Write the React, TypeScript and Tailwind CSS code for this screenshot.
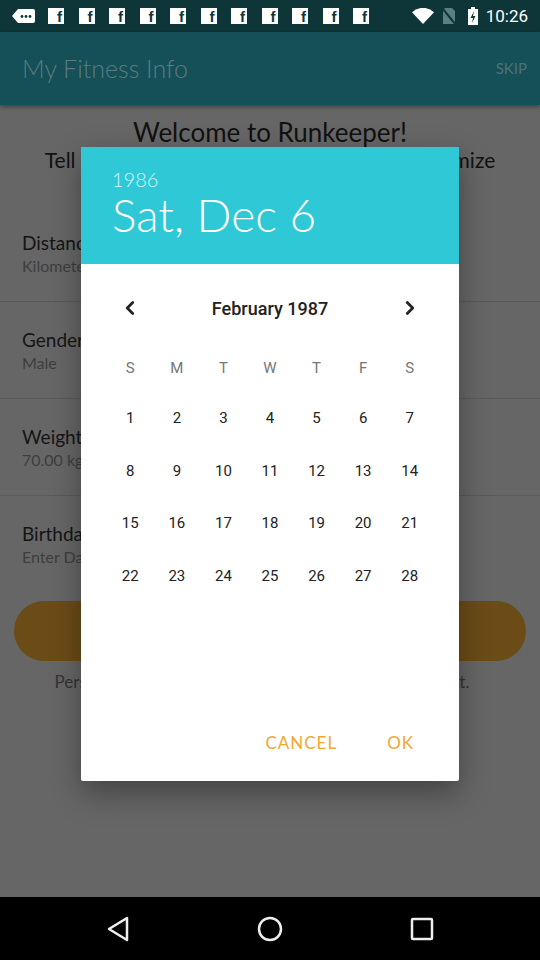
import { ChevronLeft, ChevronRight } from "lucide-react";

const WEEKDAYS = ["S", "M", "T", "W", "T", "F", "S"];
const DAYS = Array.from({ length: 28 }, (_, i) => i + 1);

function StatusBar() {
  return (
    <div className="flex h-[32px] items-center bg-[#0e3538] pl-[12px] pr-[12px] text-white">
      {/* notification bubble */}
      <svg width="23" height="14" viewBox="0 0 23 14" className="mr-[13px]">
        <path d="M6 0h15a2 2 0 0 1 2 2v10a2 2 0 0 1-2 2H6L0 7z" fill="#fff" />
        <circle cx="10" cy="7.5" r="1.4" fill="#0e3538" />
        <circle cx="14" cy="7.5" r="1.4" fill="#0e3538" />
        <circle cx="18" cy="7.5" r="1.4" fill="#0e3538" />
      </svg>
      <div className="flex gap-[14.5px]">
        {Array.from({ length: 11 }).map((_, i) => (
          <div
            key={i}
            className="flex h-[16px] w-[16px] items-end justify-end bg-white pr-[2px] font-['Liberation_Sans',sans-serif] text-[15px] font-bold leading-[14px] text-[#0e3538]"
          >
            f
          </div>
        ))}
      </div>
      <div className="ml-auto flex items-center">
        <svg width="22" height="16" viewBox="0 0 22 16">
          <path d="M11 16L0 4.2A16 16 0 0 1 22 4.2z" fill="#fff" />
        </svg>
        <svg width="14" height="18" viewBox="0 0 14 18" className="ml-[8px]">
          <path d="M3 1h7l3 3v13H1V3z" fill="#5c7f81" />
          <path d="M0.5 1.5L13.5 17.5" stroke="#0e3538" strokeWidth="2" />
        </svg>
        <svg width="10" height="18" viewBox="0 0 10 18" className="ml-[12px]">
          <rect x="3" y="0" width="4" height="2" fill="#fff" />
          <rect x="0" y="2" width="10" height="16" fill="#fff" />
          <path d="M6 4L2.5 11h2.5l-1 5 3.5-7H5z" fill="#0e3538" />
        </svg>
        <span className="ml-[8px] font-['Roboto',sans-serif] text-[17px] leading-none">10:26</span>
      </div>
    </div>
  );
}

function FieldRow({ label, value, last }: { label: string; value: string; last?: boolean }) {
  return (
    <div className={`flex h-[97px] flex-col justify-center px-[22px] ${last ? "" : "border-b border-[#5a5a5a]"}`}>
      <div className="text-[19px] leading-[25px] text-[#151515]">{label}</div>
      <div className="text-[16px] leading-[22px] text-[#3e3e3e]">{value}</div>
    </div>
  );
}

function DatePicker() {
  return (
    <div className="absolute left-[81px] top-[147px] flex h-[634px] w-[378px] flex-col rounded-[2px] bg-white shadow-[0_12px_30px_rgba(0,0,0,0.35)]">
      <div className="flex h-[117px] flex-col bg-[#2ec8d6] pl-[31px] pt-[21px] font-['Lato',sans-serif] font-light text-white">
        <div className="text-[20px] leading-[22px] text-[#d9f5f8]">1986</div>
        <div className="mt-[2px] text-[46px] leading-[46px]">Sat, Dec 6</div>
      </div>
      <div className="flex flex-1 flex-col px-[26px] pt-[20px] font-['Roboto',sans-serif]">
        <div className="flex h-[48px] items-center justify-between">
          <div className="flex w-[46.5px] justify-center text-[#222]">
            <ChevronLeft size={22} strokeWidth={3} />
          </div>
          <div className="text-[18px] font-medium text-[#222]">February 1987</div>
          <div className="flex w-[46.5px] justify-center text-[#222]">
            <ChevronRight size={22} strokeWidth={3} />
          </div>
        </div>
        <div className="mt-[12px] grid grid-cols-7">
          {WEEKDAYS.map((d, i) => (
            <div key={i} className="flex h-[48px] items-center justify-center text-[15px] text-[#767676]">
              {d}
            </div>
          ))}
          {DAYS.map((d) => (
            <div key={d} className="flex h-[52.5px] items-center justify-center text-[15px] text-[#222]">
              {d}
            </div>
          ))}
        </div>
        <div className="mt-auto mb-[20px] -mr-[26px] flex h-[36px] items-center justify-end gap-[18px] pr-[29px] font-['Lato',sans-serif] text-[17px] tracking-[1px] text-[#f3a733]">
          <span className="px-4">CANCEL</span>
          <span className="px-4">OK</span>
        </div>
      </div>
    </div>
  );
}

export default function App() {
  return (
    <div className="relative flex h-[960px] w-[540px] flex-col overflow-hidden bg-[#666666] font-['Lato',sans-serif]">
      <StatusBar />
      <div className="flex h-[73px] items-center justify-between bg-[#154f57] pl-[22px] pr-[13px] shadow-[0_2px_4px_rgba(0,0,0,0.35)]">
        <span className="text-[25px] font-light text-[#5a7c80]">My Fitness Info</span>
        <span className="text-[15px] text-[#4e7276]">SKIP</span>
      </div>
      <div className="flex flex-1 flex-col">
        <div className="pt-[12px] text-center">
          <div className="text-[26px] leading-[30px] text-[#111]">Welcome to Runkeeper!</div>
          <div className="text-[21px] leading-[26px] text-[#111]">
            Tell us a little about yourself so we can customize
            <br />
            your experience.
          </div>
        </div>
        <div className="mt-[6px]">
          <FieldRow label="Distance Units" value="Kilometers" />
          <FieldRow label="Gender" value="Male" />
          <FieldRow label="Weight" value="70.00 kg" />
          <FieldRow label="Birthday" value="Enter Date" last />
        </div>
        <div className="mt-[8px] px-[14px]">
          <div className="flex h-[60px] items-center justify-center rounded-full bg-[#6b4c17] text-[18px] text-[#666]">
            Continue
          </div>
        </div>
        <div className="mt-[8px] pr-[16px] text-center text-[17px] text-[#333]">
          Personal info helps us estimate calories. Only you see it.
        </div>
      </div>
      <div className="flex h-[63px] items-center justify-center gap-[112px] bg-black">
        <div className="flex w-[40px] justify-center">
          <svg width="24" height="26" viewBox="0 0 24 26">
            <path d="M21 2L3 13l18 11z" fill="none" stroke="#eee" strokeWidth="2.5" strokeLinejoin="round" />
          </svg>
        </div>
        <div className="flex w-[40px] justify-center">
          <svg width="26" height="26" viewBox="0 0 26 26">
            <circle cx="13" cy="13" r="11" fill="none" stroke="#eee" strokeWidth="2.5" />
          </svg>
        </div>
        <div className="flex w-[40px] justify-center">
          <svg width="24" height="24" viewBox="0 0 24 24">
            <rect x="2" y="2" width="20" height="20" rx="1" fill="none" stroke="#eee" strokeWidth="2.5" />
          </svg>
        </div>
      </div>
      <DatePicker />
    </div>
  );
}
